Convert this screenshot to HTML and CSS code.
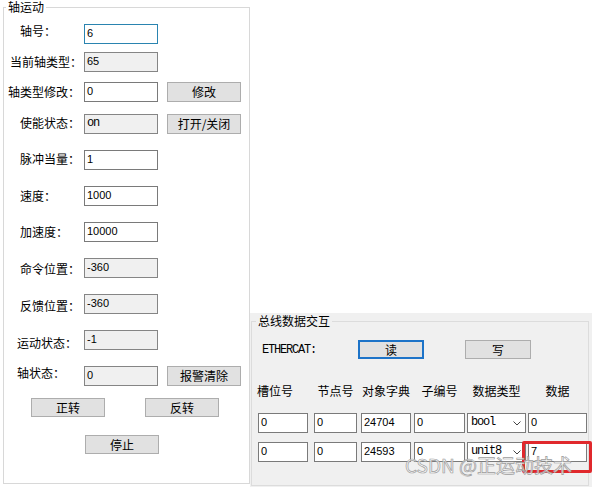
FILE: index.html
```html
<!DOCTYPE html>
<html lang="zh-CN">
<head>
<meta charset="utf-8">
<title>轴运动</title>
<link rel="stylesheet" href="styles.css">
</head>
<body>
<div class="app">
  <div class="left">
    <fieldset class="group axis">
      <legend class="group-title">轴运动</legend>
      <div class="form">
        <span class="lbl up3">轴号：</span><div class="edit focus">6</div><span></span>
        <span class="lbl wide">当前轴类型：</span><div class="edit ro">65</div><span></span>
        <span class="lbl wider">轴类型修改：</span><div class="edit">0</div><button class="btn side">修改</button>
        <span class="lbl up1">使能状态：</span><div class="edit ro mono">on</div><button class="btn side">打开/关闭</button>
        <span class="lbl up1">脉冲当量：</span><div class="edit">1</div><span></span>
        <span class="lbl">速度：</span><div class="edit">1000</div><span></span>
        <span class="lbl">加速度：</span><div class="edit">10000</div><span></span>
        <span class="lbl dn1">命令位置：</span><div class="edit ro">-360</div><span></span>
        <span class="lbl dn2">反馈位置：</span><div class="edit ro">-360</div><span></span>
        <span class="lbl dn3 mid">运动状态：</span><div class="edit ro">-1</div><span></span>
        <span class="lbl up3 mid">轴状态：</span><div class="edit ro">0</div><button class="btn side">报警清除</button>
      </div>
      <div class="dir-row">
        <button class="btn">正转</button>
        <button class="btn">反转</button>
      </div>
      <div class="stop-row">
        <button class="btn">停止</button>
      </div>
    </fieldset>
  </div>
  <div class="right">
    <div class="bus">
      <fieldset class="group bus-group">
        <legend class="group-title bus-title">总线数据交互</legend>
        <div class="eth-row">
          <span class="eth-label mono">ETHERCAT:</span>
          <button class="btn wide-btn default">读</button>
          <button class="btn wide-btn write">写</button>
        </div>
        <div class="table">
          <span class="th w50 first">槽位号</span>
          <span class="th w43">节点号</span>
          <span class="th w50">对象字典</span>
          <span class="th w51">子编号</span>
          <span class="th w59">数据类型</span>
          <span class="th w59">数据</span>

          <div class="edit cell w50">0</div>
          <div class="edit cell w43">0</div>
          <div class="edit cell w50">24704</div>
          <div class="edit cell w51">0</div>
          <div class="combo w59"><span class="mono">bool</span><svg class="chev" width="8" height="5" viewBox="0 0 8 5"><polyline points="0.5,0.5 4,4 7.5,0.5" fill="none" stroke="#444" stroke-width="1"/></svg></div>
          <div class="edit cell w59">0</div>

          <div class="edit cell w50">0</div>
          <div class="edit cell w43">0</div>
          <div class="edit cell w50">24593</div>
          <div class="edit cell w51">0</div>
          <div class="combo w59"><span class="mono">unit8</span><svg class="chev" width="8" height="5" viewBox="0 0 8 5"><polyline points="0.5,0.5 4,4 7.5,0.5" fill="none" stroke="#444" stroke-width="1"/></svg></div>
          <div class="edit cell w59">7</div>
        </div>
      </fieldset>
      <div class="highlight"></div>
      <div class="watermark">CSDN @正运动技术</div>
    </div>
  </div>
</div>
</body>
</html>
```

FILE: styles.css
```css
html, body {
  margin: 0;
  padding: 0;
  background: #ffffff;
}

body {
  font-family: "Noto Sans CJK SC", "Noto Sans", sans-serif;
  font-size: 12px;
  color: #000;
  overflow: hidden;
}

.app {
  display: flex;
  width: 592px;
  height: 487px;
}

.left {
  width: 247px;
  padding-left: 3px;
  flex: none;
}

.right {
  flex: 1;
  display: flex;
  flex-direction: column;
  justify-content: flex-end;
}

.group {
  margin: 0;
  padding: 0;
  border: 1px solid #d8d8d8;
  box-sizing: border-box;
  min-width: 0;
}

.group-title {
  padding: 0 2px;
  margin-left: 2px;
  line-height: 14px;
  font-size: 12px;
}

.axis {
  width: 247px;
  height: 484px;
}

.form {
  display: grid;
  grid-template-columns: 80px 74px 83px;
  grid-template-rows: 28px 30px 32px repeat(7, 36px) 32px;
  margin-top: 10px;
  align-items: start;
}

.lbl {
  display: block;
  height: 20px;
  line-height: 20px;
  padding-left: 16px;
  white-space: nowrap;
}

.lbl.wide { padding-left: 6px; }
.lbl.wider { padding-left: 4px; }
.lbl.mid { padding-left: 13px; }
.lbl.up3 { margin-top: -3px; }
.lbl.up1 { margin-top: -1px; }
.lbl.dn1 { margin-top: 1px; }
.lbl.dn2 { margin-top: 2px; }
.lbl.dn3 { margin-top: 3px; }

.edit {
  box-sizing: border-box;
  width: 74px;
  height: 20px;
  border: 1px solid #7a7a7a;
  background: #fff;
  padding: 0 2px;
  font-family: "Liberation Sans", Arial, sans-serif;
  font-size: 11px;
  line-height: 16px;
  white-space: nowrap;
  overflow: hidden;
}

.edit.ro {
  background: #f0f0f0;
  border-color: #858585;
}

.edit.focus {
  border-color: #2a84b0;
}

.mono {
  font-family: "Liberation Mono", "DejaVu Sans Mono", monospace;
  font-size: 12px;
  letter-spacing: -1.2px;
}

.btn {
  box-sizing: border-box;
  width: 74px;
  height: 19px;
  margin: 0;
  padding: 0;
  border: 1px solid #adadad;
  background: #e1e1e1;
  font-family: "Noto Sans CJK SC", sans-serif;
  font-size: 12px;
  line-height: 16px;
  color: #000;
  display: flex;
  align-items: center;
  justify-content: center;
}

.btn.side {
  margin-left: 9px;
  height: 20px;
}

.dir-row {
  display: flex;
  gap: 40px;
  padding-left: 27px;
}

.stop-row {
  display: flex;
  margin-top: 18px;
  padding-left: 81px;
}

/* bus panel */
.bus {
  position: relative;
  height: 174px;
  background: #f0f0f0;
  padding-left: 1px;
}

.bus-group {
  width: 338px;
  height: 173px;
  border-color: #dcdcdc;
}

.bus-title {
  line-height: 16px;
  margin-left: 4px;
}

.eth-row {
  display: flex;
  align-items: center;
  margin-top: 11px;
  height: 19px;
}

.eth-label {
  width: 96px;
  padding-left: 10px;
  white-space: nowrap;
}

.wide-btn {
  width: 66px;
}

.btn.default {
  border: 2px solid #1c73c8;
}

.btn.write {
  margin-left: 41px;
}

.table {
  display: grid;
  grid-template-columns: 56px 47px 53px 53px 61px 60px;
  grid-template-rows: 32px 29px 20px;
  margin-top: 22px;
  margin-left: 6px;
  align-items: start;
}

.th {
  display: block;
  height: 20px;
  line-height: 20px;
  text-align: center;
  white-space: nowrap;
}

.th.first {
  text-align: left;
  margin-left: -1px;
}

.w50 { width: 50px; }
.w43 { width: 43px; }
.w51 { width: 51px; }
.w59 { width: 59px; }

.edit.cell {
  padding-left: 2px;
}

.combo {
  box-sizing: border-box;
  height: 20px;
  border: 1px solid #7a7a7a;
  background: #fff;
  display: flex;
  align-items: center;
  justify-content: space-between;
  padding: 0 4px 0 3px;
  line-height: 16px;
}

.combo .mono {
  margin-top: -2px;
}

.chev {
  display: block;
}

.highlight {
  position: absolute;
  left: 272px;
  top: 128px;
  width: 70px;
  height: 32px;
  box-sizing: border-box;
  border: 3px solid #e0282c;
  border-radius: 2px;
}

.watermark {
  position: absolute;
  left: 155px;
  top: 140px;
  font-family: "Noto Sans CJK SC", "Noto Sans", sans-serif;
  font-size: 19px;
  line-height: 24px;
  color: rgba(255, 255, 255, 0.75);
  -webkit-text-stroke: 0.7px #9c9c9c;
  white-space: nowrap;
}
```
